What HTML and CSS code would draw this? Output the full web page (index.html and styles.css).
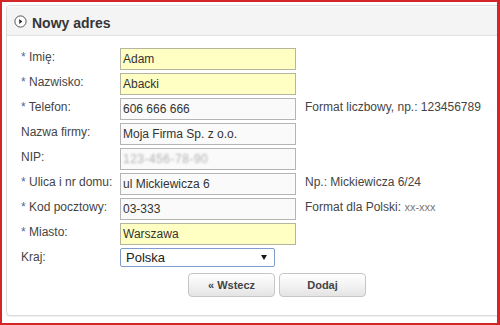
FILE: index.html
```html
<!DOCTYPE html>
<html lang="pl">
<head>
<meta charset="utf-8">
<title>Nowy adres</title>
<link rel="stylesheet" href="styles.css">
</head>
<body>
<div class="frame">
  <div class="panel">
    <div class="panel-head">
      <svg class="head-icon" width="13" height="13" viewBox="0 0 13 13" aria-hidden="true">
        <circle cx="6.5" cy="6.5" r="5.6" fill="#fff" stroke="#555" stroke-width="1"/>
        <path d="M5.2 4.1 L8.4 6.5 L5.2 8.9 Z" fill="#333"/>
      </svg>
      <h1 class="title">Nowy adres</h1>
    </div>
    <form class="panel-body">
      <div class="row">
        <label class="label"><span class="req">*</span> Imię:</label>
        <input class="field required" type="text" value="Adam">
      </div>
      <div class="row">
        <label class="label"><span class="req">*</span> Nazwisko:</label>
        <input class="field required" type="text" value="Abacki">
      </div>
      <div class="row">
        <label class="label"><span class="req">*</span> Telefon:</label>
        <input class="field" type="text" value="606 666 666">
        <span class="hint">Format liczbowy, np.: 123456789</span>
      </div>
      <div class="row">
        <label class="label">Nazwa firmy:</label>
        <input class="field" type="text" value="Moja Firma Sp. z o.o.">
      </div>
      <div class="row">
        <label class="label">NIP:</label>
        <div class="field blurred"><span class="blur-text">123-456-78-90</span></div>
      </div>
      <div class="row">
        <label class="label"><span class="req">*</span> Ulica i nr domu:</label>
        <input class="field" type="text" value="ul Mickiewicza 6">
        <span class="hint">Np.: Mickiewicza 6/24</span>
      </div>
      <div class="row">
        <label class="label"><span class="req">*</span> Kod pocztowy:</label>
        <input class="field" type="text" value="03-333">
        <span class="hint">Format dla Polski: <span class="hint-light">xx-xxx</span></span>
      </div>
      <div class="row">
        <label class="label"><span class="req">*</span> Miasto:</label>
        <input class="field required" type="text" value="Warszawa">
      </div>
      <div class="row row-select">
        <label class="label">Kraj:</label>
        <div class="select-wrap">
          <select class="select">
            <option>Polska</option>
          </select>
          <span class="arrow"></span>
        </div>
      </div>
      <div class="buttons">
        <button type="button" class="btn">« Wstecz</button>
        <button type="button" class="btn">Dodaj</button>
      </div>
    </form>
  </div>
</div>
</body>
</html>
```

FILE: styles.css
```css
* {
  box-sizing: border-box;
}

html, body {
  margin: 0;
  padding: 0;
  background: #fff;
}

body {
  font-family: "Liberation Sans", Arial, sans-serif;
  font-size: 12px;
  color: #444;
}

.frame {
  width: 500px;
  height: 325px;
  border-style: solid;
  border-color: #d42626;
  border-width: 2px 3px 2px 2px;
  overflow: hidden;
  background: #fff;
}

.panel {
  margin: 3px 0 0 4px;
  width: 620px;
  border: 1px solid #dcdcdc;
  border-radius: 4px;
  box-shadow: 0 1px 0 #f0f0f0;
  background: #fff;
}

.panel-head {
  display: flex;
  align-items: center;
  height: 30px;
  padding-left: 7px;
  background: #f4f4f4;
  border-top: 1px solid #fff;
  border-bottom: 1px solid #e2e2e2;
  border-radius: 4px 4px 0 0;
}

.head-icon {
  display: block;
  margin-top: 1px;
  margin-right: 5px;
}

.title {
  margin: 0;
  padding-top: 3px;
  font-size: 14px;
  line-height: 16px;
  font-weight: bold;
  color: #363636;
}

.panel-body {
  margin: 0;
  padding: 12px 0 18px 14px;
}

.row {
  display: flex;
  align-items: flex-start;
  height: 22px;
  margin-bottom: 3px;
}

.row-select {
  height: 19px;
  margin-bottom: 6px;
}

.label {
  width: 99px;
  flex: none;
  padding-top: 1px;
  line-height: 16px;
  color: #444;
  white-space: nowrap;
}

.req {
  color: #4a68a6;
}

.field {
  flex: none;
  width: 176px;
  height: 22px;
  margin: 0;
  padding: 0 2px;
  border: 1px solid #b4b4b4;
  border-radius: 0;
  background: #fafafa;
  font-family: "Liberation Sans", Arial, sans-serif;
  font-size: 12px;
  color: #333;
  outline: none;
}

.field.required {
  background: #ffffc4;
  border-color: #b6b6a0;
}

.blurred {
  display: flex;
  align-items: center;
  overflow: hidden;
}

.blur-text {
  color: #b0b0b0;
  letter-spacing: 0.5px;
  filter: blur(1.3px);
}

.hint {
  margin-left: 9px;
  padding-top: 1px;
  line-height: 16px;
  color: #444;
  white-space: nowrap;
}

.hint-light {
  color: #777;
  font-size: 11px;
}

.select-wrap {
  position: relative;
  width: 155px;
  height: 19px;
}

.select {
  display: block;
  width: 155px;
  height: 19px;
  margin: 0;
  padding: 0 0 0 5px;
  border: 1px solid #7f9dc8;
  border-radius: 2px;
  background: #fff;
  font-family: "Liberation Sans", Arial, sans-serif;
  font-size: 13px;
  line-height: 17px;
  color: #222;
  -webkit-appearance: none;
  appearance: none;
  outline: none;
}

.arrow {
  position: absolute;
  right: 8px;
  top: 7px;
  width: 0;
  height: 0;
  border-left: 3px solid transparent;
  border-right: 3px solid transparent;
  border-top: 5px solid #1a1a1a;
  pointer-events: none;
}

.buttons {
  display: flex;
  gap: 4px;
  padding-left: 167px;
}

.btn {
  width: 87px;
  height: 24px;
  margin: 0;
  padding: 0;
  border: 1px solid #c6c6c6;
  border-radius: 4px;
  background: linear-gradient(#ffffff, #f3f3f3 50%, #e4e4e4);
  font-family: "Liberation Sans", Arial, sans-serif;
  font-size: 11px;
  font-weight: bold;
  color: #444;
  cursor: pointer;
}
```
